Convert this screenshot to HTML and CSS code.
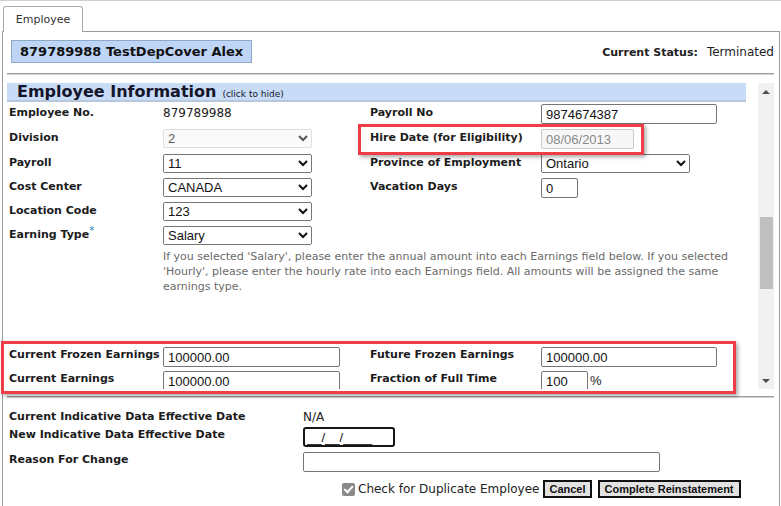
FILE: index.html
```html
<!DOCTYPE html>
<html>
<head>
<meta charset="utf-8">
<link rel="stylesheet" href="styles.css">
</head>
<body>
<div class="page">
  <div class="tabs"><div class="tab">Employee</div></div>
  <div class="panel">
    <div class="head">
      <div class="emp-title">879789988 TestDepCover Alex</div>
      <div class="status"><b>Current Status:</b><span class="status-val">Terminated</span></div>
    </div>
    <div class="rule"></div>
    <div class="scroll">
      <div class="scroll-content">
        <div class="sect-bar"><span class="sect-title">Employee Information</span><span class="sect-hint">(click to hide)</span></div>
        <div class="form-grid">
          <div class="lbl">Employee No.</div>
          <div class="val">879789988</div>
          <div class="lbl">Payroll No</div>
          <div><input class="inp w176" type="text" value="9874674387"></div>

          <div class="lbl">Division</div>
          <div><select class="sel" disabled><option>2</option></select></div>
          <div class="lbl">Hire Date (for Eligibility)</div>
          <div><input class="inp w93" type="text" value="08/06/2013" disabled></div>

          <div class="lbl">Payroll</div>
          <div><select class="sel"><option>11</option></select></div>
          <div class="lbl">Province of Employment</div>
          <div><select class="sel"><option>Ontario</option></select></div>

          <div class="lbl">Cost Center</div>
          <div><select class="sel"><option>CANADA</option></select></div>
          <div class="lbl">Vacation Days</div>
          <div><input class="inp w37" type="text" value="0"></div>

          <div class="lbl">Location Code</div>
          <div><select class="sel"><option>123</option></select></div>
          <div></div>
          <div></div>

          <div class="lbl">Earning Type<span class="req">*</span></div>
          <div><select class="sel"><option>Salary</option></select></div>
          <div></div>
          <div></div>

          <div class="help">If you selected 'Salary', please enter the annual amount into each Earnings field below. If you selected 'Hourly', please enter the hourly rate into each Earnings field. All amounts will be assigned the same earnings type.</div>

          <div class="lbl lbl-tight">Current Frozen Earnings</div>
          <div><input class="inp w177" type="text" value="100000.00"></div>
          <div class="lbl lbl-tight">Future Frozen Earnings</div>
          <div><input class="inp w176" type="text" value="100000.00"></div>

          <div class="lbl lbl-tight">Current Earnings</div>
          <div><input class="inp w177" type="text" value="100000.00"></div>
          <div class="lbl lbl-tight">Fraction of Full Time</div>
          <div class="pct-cell"><input class="inp w47" type="text" value="100"><span class="pct">%</span></div>
        </div>
      </div>
      <div class="vscroll">
        <div class="arr"><span class="tri-up"></span></div>
        <div class="thumb"></div>
        <div class="spacer"></div>
        <div class="arr"><span class="tri-down"></span></div>
      </div>
    </div>
    <div class="rule rule-b"></div>
    <div class="bottom-grid">
      <div class="lbl">Current Indicative Data Effective Date</div>
      <div class="val">N/A</div>
      <div class="lbl">New Indicative Data Effective Date</div>
      <div><input class="inp date-inp" type="text" value="__/__/____"></div>
      <div class="lbl">Reason For Change</div>
      <div><input class="inp w357" type="text" value=""></div>
      <div class="actions">
        <span class="chk" role="checkbox" aria-checked="true" aria-disabled="true"><svg width="13" height="13" viewBox="0 0 13 13"><path d="M3 6.8 L5.4 9.2 L10.2 3.8" fill="none" stroke="#fff" stroke-width="2" stroke-linecap="square"/></svg></span>
        <span class="chk-text">Check for Duplicate Employee</span>
        <button class="btn btn-cancel">Cancel</button>
        <button class="btn">Complete Reinstatement</button>
      </div>
    </div>
  </div>
  <div class="annot annot-hire"></div>
  <div class="annot annot-earn"></div>
</div>
</body>
</html>
```

FILE: styles.css
```css
* { box-sizing: border-box; }
html, body { margin: 0; padding: 0; background: #fff; }
body {
  font-family: "DejaVu Sans", Verdana, sans-serif;
  color: #222;
  font-size: 12px;
  overflow: hidden;
}
.page {
  position: relative;
  width: 781px;
  height: 506px;
  border-top: 1px solid #cfcfcf;
  padding-top: 5px;
}
.tabs {
  display: flex;
  padding-left: 3px;
  position: relative;
  z-index: 2;
}
.tab {
  width: 80px;
  height: 26px;
  border: 1px solid #a9a9a9;
  border-bottom: none;
  border-radius: 3px 3px 0 0;
  background: #fff;
  font-size: 11px;
  color: #333;
  display: flex;
  align-items: center;
  justify-content: center;
  margin-bottom: -1px;
}
.panel {
  margin-left: 2px;
  width: 778px;
  height: 480px;
  border: 1px solid #9a9a9a;
  border-bottom: none;
  padding: 8px 5px 0 4px;
}
.head {
  display: flex;
  align-items: center;
  justify-content: space-between;
}
.emp-title {
  margin-left: 4px;
  height: 23px;
  padding: 0 8px;
  background: #bed5f6;
  border: 1px solid #8fa8c9;
  font-weight: bold;
  font-size: 13px;
  line-height: 21px;
  color: #111;
}
.status { font-size: 11px; }
.status b { font-weight: bold; }
.status-val { font-size: 12px; margin-left: 9px; }
.rule {
  margin-top: 10px;
  height: 2px;
  border-top: 1px solid #9c9c9c;
  border-bottom: 1px solid #d4d4d4;
}
.scroll {
  margin-top: 8px;
  height: 306px;
  display: flex;
}
.scroll-content {
  flex: 1;
  overflow: hidden;
  padding-right: 12px;
}
.sect-bar {
  height: 19px;
  background: #c8dcf8;
  border-bottom: 2px solid #b7c7dc;
  padding-left: 10px;
  display: flex;
  align-items: baseline;
  color: #15152a;
}
.sect-title {
  font-weight: bold;
  font-size: 16px;
  line-height: 17px;
}
.sect-hint {
  font-size: 9px;
  margin-left: 6px;
}
.form-grid {
  margin-top: 2px;
  padding-left: 2px;
  display: grid;
  grid-template-columns: 154px 207px 171px 1fr;
  grid-template-rows: 25px 25px 24px 24px 24px 24px auto 24px 24px;
}
.lbl {
  font-weight: bold;
  font-size: 11px;
  line-height: 14px;
  padding-top: 2px;
  color: #1c1c1c;
  white-space: nowrap;
}
.lbl-tight { padding-top: 1px; }
.val {
  font-size: 12px;
  line-height: 14px;
  padding-top: 2px;
  color: #222;
}
.req {
  color: #1f86b8;
  font-size: 10px;
  line-height: 0;
  vertical-align: 4px;
  font-weight: normal;
}
.inp {
  font-family: "Liberation Sans", Arial, sans-serif;
  font-size: 13px;
  height: 20px;
  border: 1px solid #767676;
  border-radius: 2px;
  padding: 0 4px;
  margin: 0;
  background: #fff;
  color: #111;
  outline: none;
}
.inp:disabled {
  border-color: #cacaca;
  background: #f7f7f7;
  color: #8a8a8a;
}
.w176 { width: 176px; }
.w177 { width: 177px; }
.w93 { width: 93px; }
.w37 { width: 37px; }
.w47 { width: 47px; }
.w357 { width: 357px; }
.sel {
  font-family: "Liberation Sans", Arial, sans-serif;
  font-size: 13px;
  width: 149px;
  height: 19px;
  margin: 0;
  color: #111;
}
.help {
  grid-column: 2 / -1;
  margin-top: -1px;
  margin-bottom: 53px;
  font-family: "DejaVu Sans", Verdana, sans-serif;
  font-size: 11px;
  line-height: 15px;
  color: #6a6a6a;
  padding-right: 8px;
}
.pct-cell { display: flex; align-items: flex-start; }
.pct {
  font-family: "Liberation Sans", Arial, sans-serif;
  font-size: 13px;
  line-height: 20px;
  margin-left: 2px;
}
.vscroll {
  width: 16px;
  background: #f1f1f1;
  display: flex;
  flex-direction: column;
  align-items: center;
}
.arr {
  height: 17px;
  width: 16px;
  display: flex;
  align-items: center;
  justify-content: center;
}
.tri-up {
  width: 0; height: 0;
  border-left: 4px solid transparent;
  border-right: 4px solid transparent;
  border-bottom: 4px solid #505050;
}
.tri-down {
  width: 0; height: 0;
  border-left: 4px solid transparent;
  border-right: 4px solid transparent;
  border-top: 4px solid #505050;
}
.thumb {
  margin-top: 117px;
  width: 13px;
  height: 72px;
  background: #bfbfbf;
}
.spacer { flex: 1; }
.rule-b { margin-top: 7px; }
.bottom-grid {
  margin-top: 11px;
  padding-left: 2px;
  display: grid;
  grid-template-columns: 294px 1fr;
  grid-template-rows: 18px 25px 28px auto;
}
.bottom-grid .lbl { padding-top: 1px; }
.bottom-grid .val { padding-top: 1px; }
.date-inp {
  width: 92px;
  border: 2px solid #161616;
  border-radius: 3px;
  padding: 0 2px;
}
.actions {
  grid-column: 2;
  padding-left: 38px;
  display: flex;
  align-items: center;
}
.chk {
  display: inline-flex;
  width: 13px;
  height: 13px;
  margin: 0 3px 0 1px;
  background: #8a8a8a;
  border-radius: 2px;
}
.chk-text { font-size: 12px; color: #222; }
.btn {
  font-family: "Liberation Sans", Arial, sans-serif;
  font-weight: bold;
  font-size: 11px;
  height: 18px;
  padding: 0 5px;
  border: 2px solid #111;
  background: #e2e2e2;
  color: #111;
  margin: 0 0 0 6px;
  border-radius: 0;
}
.btn-cancel { padding: 0 4px; margin-left: 4px; }
.annot {
  position: absolute;
  border: 3px solid #ee3d45;
  box-shadow: 2px 2px 4px rgba(0, 0, 0, 0.35);
  pointer-events: none;
}
.annot-hire { left: 358px; top: 123px; width: 286px; height: 31px; }
.annot-earn { left: 1px; top: 340px; width: 735px; height: 53px; }
```
